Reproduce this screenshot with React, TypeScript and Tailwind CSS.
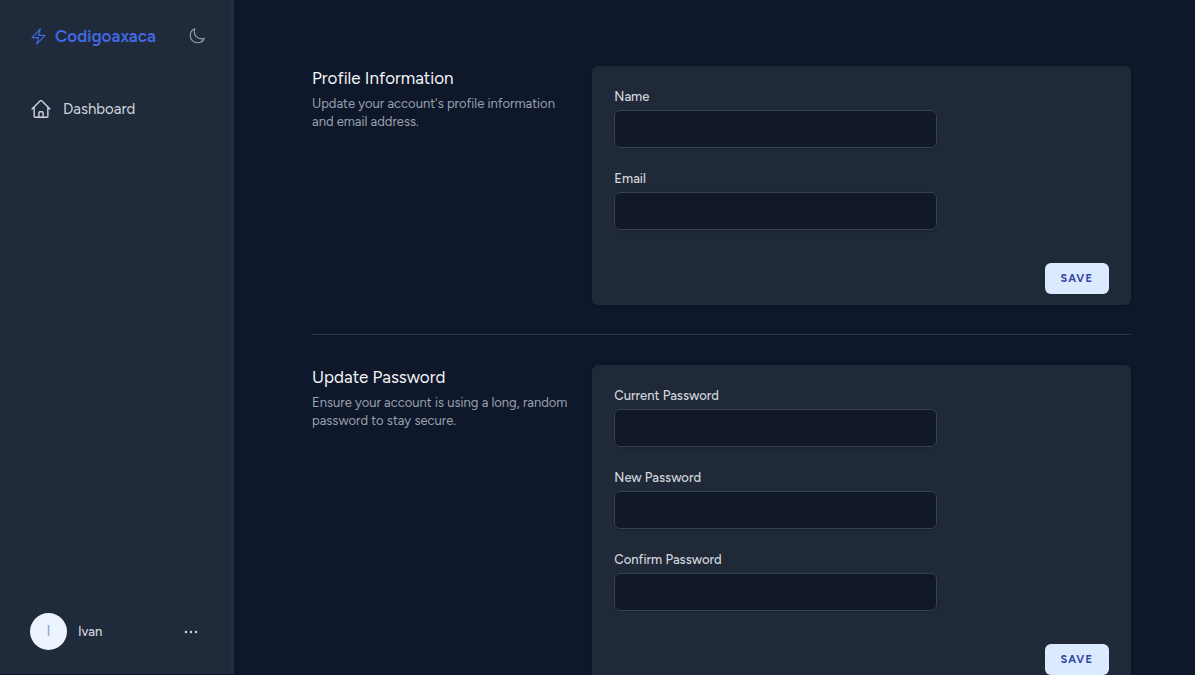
import { HiOutlineBolt, HiOutlineEllipsisHorizontal, HiOutlineHome, HiOutlineMoon } from "react-icons/hi2";

type Field = { id: string; label: string; type: string };

type SectionProps = {
  title: string;
  description: string;
  fields: Field[];
};

function FormSection({ title, description, fields }: SectionProps) {
  return (
    <section className="grid grid-cols-3 gap-[22px]">
      <div>
        <h2 className="text-[17px] leading-6 text-gray-100">{title}</h2>
        <p className="mt-[5px] text-[13px] leading-[18px] text-gray-400">{description}</p>
      </div>
      <form className="col-span-2 overflow-hidden rounded-md bg-[#202937] shadow">
        <div className="grid grid-cols-6 gap-[22px] p-[22px]">
          {fields.map((field) => (
            <div key={field.id} className="col-span-4">
              <label htmlFor={field.id} className="block text-[13px] font-medium leading-[18px] text-gray-300">
                {field.label}
              </label>
              <input
                id={field.id}
                type={field.type}
                className="mt-1 block h-[38px] w-full rounded-md border border-gray-700 bg-[#111827] px-3 text-[13px] text-gray-300 shadow-sm outline-none focus:border-indigo-600"
              />
            </div>
          ))}
        </div>
        <div className="flex justify-end px-[22px] py-[11px]">
          <button
            type="button"
            className="h-[31px] rounded-md bg-[#dbeafe] px-4 pt-px text-[11px] font-bold uppercase leading-4 tracking-widest text-[#3446a5]"
          >
            Save
          </button>
        </div>
      </form>
    </section>
  );
}

export default function App() {
  return (
    <div className="flex h-screen overflow-hidden bg-[#0f172a] font-['Figtree','Inter',sans-serif]">
      <aside className="mb-px flex w-[234px] shrink-0 flex-col border-r-3 border-[#232e40] bg-[#1f2a3b]">
        <div className="flex items-center justify-between pl-[29px] pr-[25px] pt-6">
          <a href="#" className="flex items-center gap-[7px] text-[17px] font-semibold leading-6 text-[#4169e1]">
            <HiOutlineBolt className="size-[19px]" />
            Codigoaxaca
          </a>
          <button type="button" aria-label="Toggle dark mode" className="text-gray-400">
            <HiOutlineMoon className="size-[18px]" />
          </button>
        </div>
        <nav className="mt-12 px-[30px]">
          <a href="#" className="flex items-center gap-[11px] text-[15px] leading-[26px] text-gray-300">
            <HiOutlineHome className="size-[22px]" />
            Dashboard
          </a>
        </nav>
        <div className="mt-auto flex items-center px-[30px] pb-6">
          <span className="flex size-[37px] items-center justify-center rounded-full bg-[#ebf4ff] text-[15px] text-[#94a3c0]">
            I
          </span>
          <span className="ml-[11px] text-[13px] font-medium text-gray-300">Ivan</span>
          <button type="button" aria-label="Account menu" className="ml-auto text-gray-300">
            <HiOutlineEllipsisHorizontal className="size-5" />
          </button>
        </div>
      </aside>
      <main className="min-w-0 flex-1 overflow-hidden pl-[78px] pr-16 pt-[66px]">
        <FormSection
          title="Profile Information"
          description="Update your account's profile information and email address."
          fields={[
            { id: "name", label: "Name", type: "text" },
            { id: "email", label: "Email", type: "email" },
          ]}
        />
        <div className="pb-[30px] pt-[29px]">
          <hr className="border-[#2b3646]" />
        </div>
        <FormSection
          title="Update Password"
          description="Ensure your account is using a long, random password to stay secure."
          fields={[
            { id: "current-password", label: "Current Password", type: "password" },
            { id: "new-password", label: "New Password", type: "password" },
            { id: "confirm-password", label: "Confirm Password", type: "password" },
          ]}
        />
      </main>
    </div>
  );
}
